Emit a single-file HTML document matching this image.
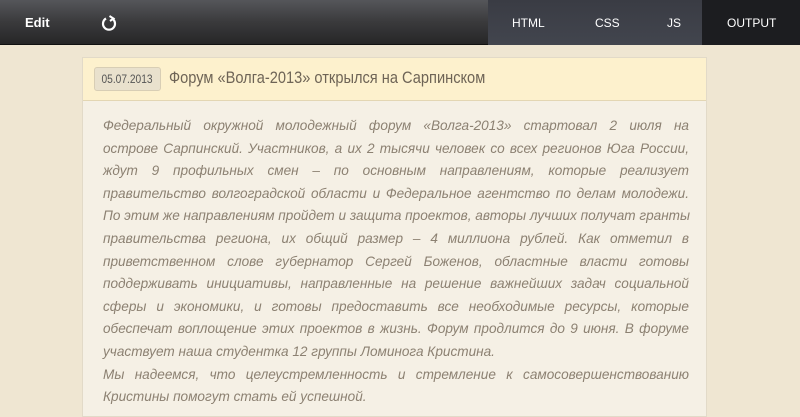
<!DOCTYPE html>
<html><head><meta charset="utf-8"><style>
*{margin:0;padding:0;box-sizing:border-box}
body{width:800px;height:400px;overflow:hidden;background:#efe6d2;font-family:"Liberation Sans",sans-serif;position:relative}
.top{position:absolute;left:0;top:0;width:800px;height:45px;background:linear-gradient(#55565a,#3a3a3c 50%,#262627);border-bottom:1px solid #111}
.edit{position:absolute;left:25px;top:15px;color:#fff;font-weight:bold;font-size:13px}
.tabs{position:absolute;left:488px;top:0;width:214px;height:45px;background:linear-gradient(#3a3c44,#42454e)}
.tab{position:absolute;top:16px;color:#fff;font-size:12px}
.out{position:absolute;left:702px;top:0;width:98px;height:45px;background:#1c1d20}
.card{position:absolute;left:82px;top:57px;width:625px;height:360px;background:#f5f0e5;border:1px solid #e2dac8}
.ch{height:43px;background:#fdf1cd;border-bottom:1px solid #e3d6b3;position:relative}
.date{position:absolute;left:11px;top:9px;width:67px;height:24px;background:#e9e1cd;border:1px solid #d8ceb5;border-radius:3px;font-size:12px;color:#555;text-align:center;line-height:22px}
.date span{display:inline-block;transform:scaleX(0.85)}
.title{position:absolute;left:86px;top:10px;font-size:17px;color:#6e6456;transform:scaleX(0.86);transform-origin:left;white-space:nowrap}
.txt{position:absolute;left:20px;top:57px;width:586px;font-style:italic;font-size:13.6px;color:#8c8172;line-height:22.6px}
.txt div{text-align:justify;text-align-last:justify;white-space:nowrap;height:22.6px}
.txt div.l{text-align-last:left}
</style></head><body>
<div class="top">
<div class="edit">Edit</div>
<svg style="position:absolute;left:100px;top:14px" width="18" height="18" viewBox="0 0 18 18"><path d="M6 4.5A6 6 0 1 0 12 4.5" fill="none" stroke="#fff" stroke-width="2.2"/><path d="M9.5 2L13.5 4.5L10 7" fill="none" stroke="#fff" stroke-width="2"/></svg>
<div class="tabs"><span class="tab" style="left:24px">HTML</span><span class="tab" style="left:107px">CSS</span><span class="tab" style="left:179px">JS</span></div>
<div class="out"><span class="tab" style="left:25px">OUTPUT</span></div>
</div>
<div class="card">
<div class="ch"><div class="date"><span>05.07.2013</span></div><div class="title">Форум «Волга-2013» открылся на Сарпинском</div></div>
<div class="txt">
<div>Федеральный окружной молодежный форум «Волга-2013» стартовал 2 июля на</div>
<div>острове Сарпинский. Участников, а их 2 тысячи человек со всех регионов Юга России,</div>
<div>ждут 9 профильных смен – по основным направлениям, которые реализует</div>
<div>правительство волгоградской области и Федеральное агентство по делам молодежи.</div>
<div>По этим же направлениям пройдет и защита проектов, авторы лучших получат гранты</div>
<div>правительства региона, их общий размер – 4 миллиона рублей. Как отметил в</div>
<div>приветственном слове губернатор Сергей Боженов, областные власти готовы</div>
<div>поддерживать инициативы, направленные на решение важнейших задач социальной</div>
<div>сферы и экономики, и готовы предоставить все необходимые ресурсы, которые</div>
<div>обеспечат воплощение этих проектов в жизнь. Форум продлится до 9 июня. В форуме</div>
<div class="l">участвует наша студентка 12 группы Ломинога Кристина.</div>
<div>Мы надеемся, что целеустремленность и стремление к самосовершенствованию</div>
<div class="l">Кристины помогут стать ей успешной.</div>
</div>
</div>
</body></html>
